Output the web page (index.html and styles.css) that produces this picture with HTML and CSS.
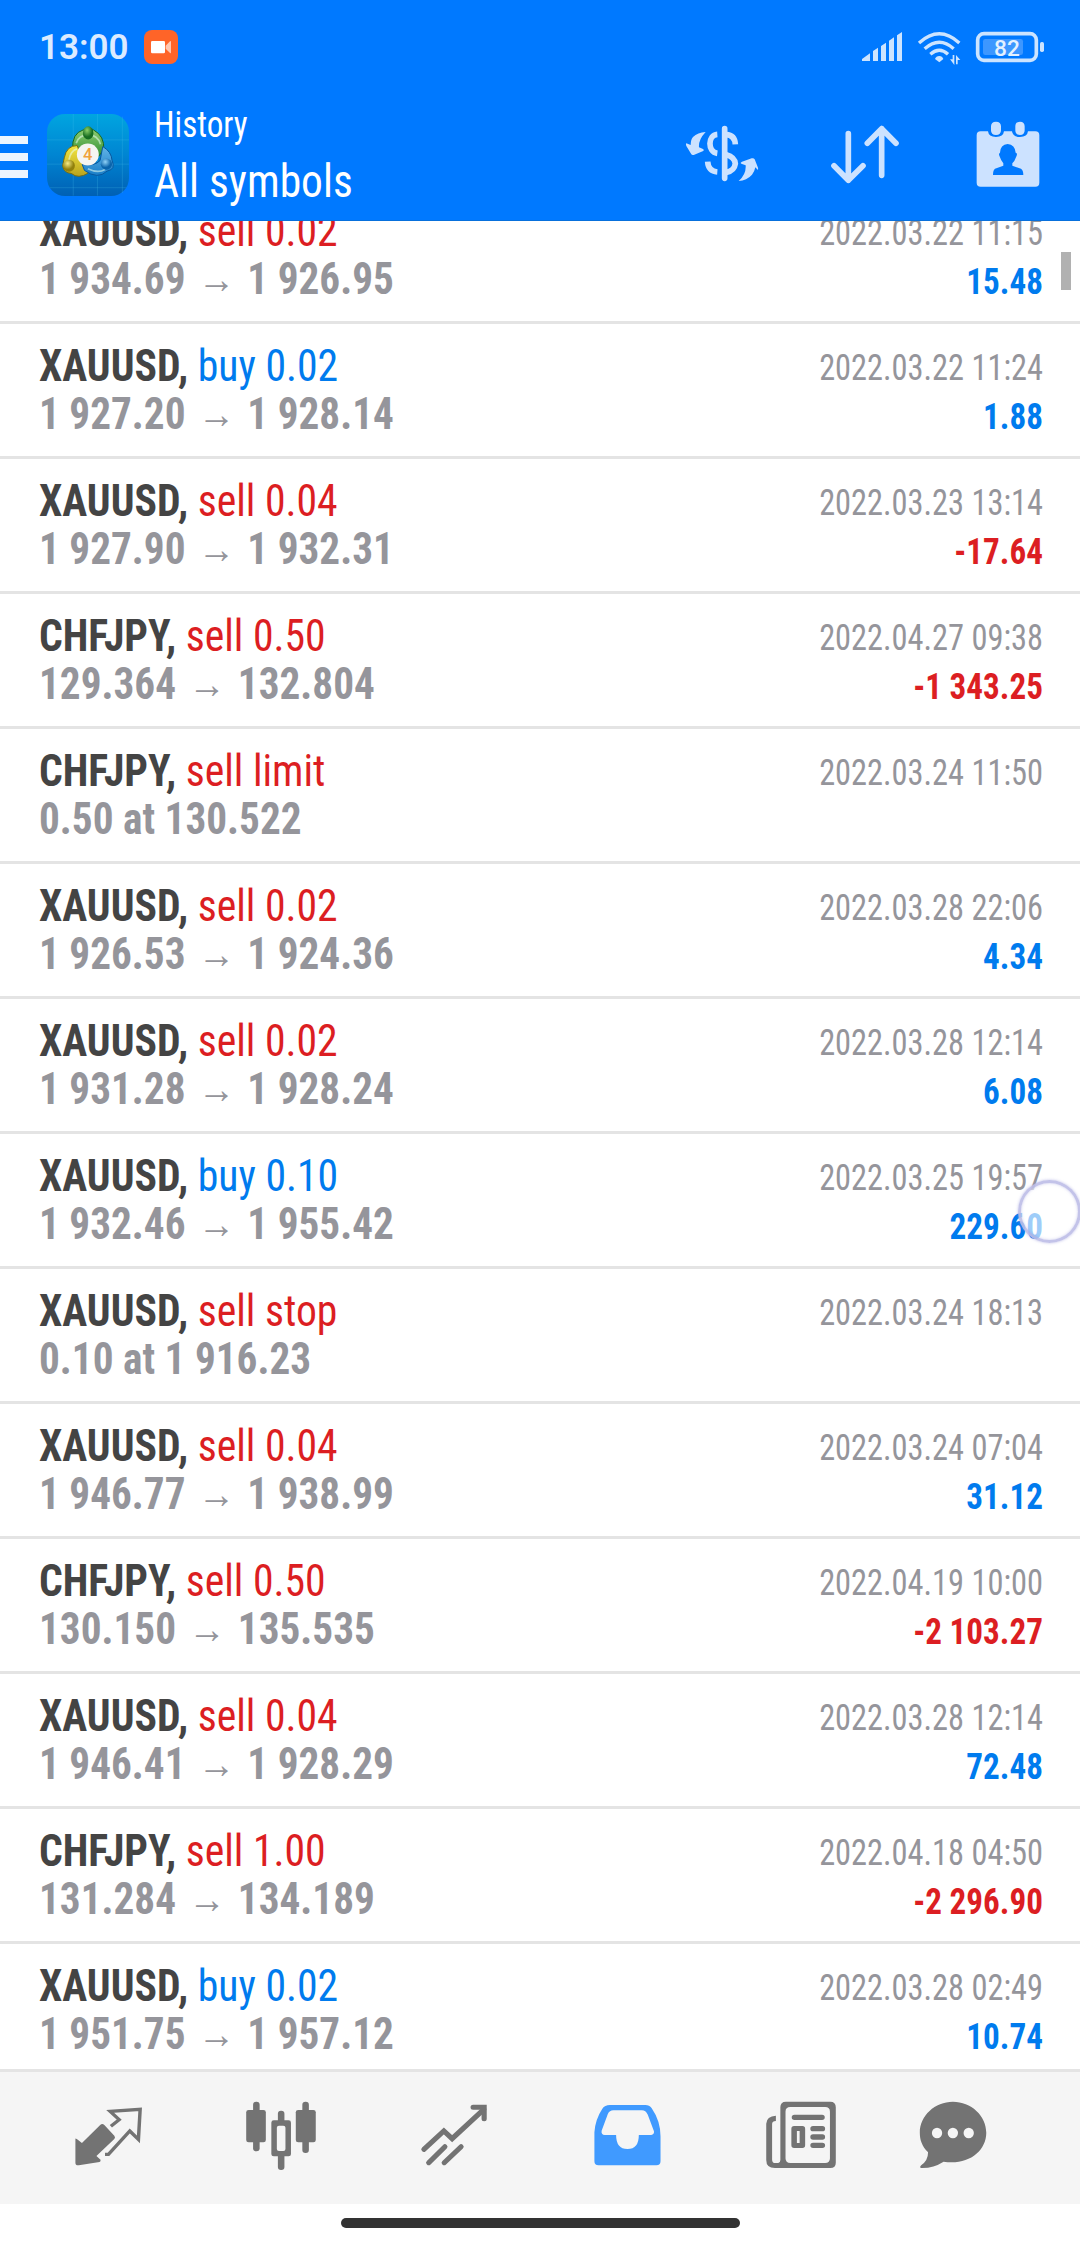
FILE: index.html
```html
<!DOCTYPE html>
<html lang="en"><head><meta charset="utf-8"><title>History</title><link rel="stylesheet" href="styles.css"></head>
<body>
<div class="app">
<header class="header">
<div class="status">
<span class="clock">13:00</span>
<svg class="rec" viewBox="0 0 102 102"><rect width="102" height="102" rx="24" fill="#ff6428"/><rect x="21" y="33" width="42" height="37" rx="4" fill="#fff"/><path d="M65 47L78 34Q81 32 81 36V67Q81 71 78 69L65 56Z" fill="#ffc7b0"/></svg>
<svg class="signals" viewBox="600 81 558 120"><g fill="#cce4ff"><path d="M606 183V177L630 160V183ZM639 183V153L654 143V183ZM663 183V138L678 128V183ZM687 183V122L702 112V183ZM711 183V106L726 96V183Z"/><path d="M825 177Q828 168 838 168Q847 168 850 177L838 187Z"/><path d="M870 178h8v-13h5v30zM888 165l13 15h-8v13h-5z"/><rect x="1140" y="126" width="12" height="30" rx="5"/></g><g fill="none" stroke="#cce4ff" stroke-width="10"><path d="M777 129Q838 74 898 129M794 146Q838 107 881 146M811 163Q838 139 864 163"/><rect x="953" y="101" width="176" height="80" rx="19" stroke-width="11"/></g><rect x="969" y="117" width="120" height="48" rx="7" fill="#3d97ff"/><text class="battery" x="1041" y="167" text-anchor="middle">82</text></svg>
</div>
<div class="toolbar">
<div class="burger"><i></i><i></i><i></i></div>
<svg class="logo" viewBox="141 342 247 247"><defs><linearGradient id="bg" x2="0" y2="1"><stop stop-color="#00a5e0"/><stop offset=".5" stop-color="#0085d2"/><stop offset="1" stop-color="#0060b4"/></linearGradient><linearGradient id="gr" x2="0" y2="1"><stop stop-color="#8ccb70"/><stop offset="1" stop-color="#2e8e31"/></linearGradient><linearGradient id="ye" x2="0" y2="1"><stop stop-color="#f3e641"/><stop offset="1" stop-color="#b9a31c"/></linearGradient><linearGradient id="bl" x2="0" y2="1"><stop stop-color="#62b4e7"/><stop offset="1" stop-color="#197ec8"/></linearGradient><radialGradient id="gh" cx=".4" cy=".3"><stop stop-color="#8cd069"/><stop offset="1" stop-color="#176d21"/></radialGradient><radialGradient id="yh" cx=".4" cy=".3"><stop stop-color="#f5ec87"/><stop offset="1" stop-color="#91800d"/></radialGradient><radialGradient id="bh" cx=".4" cy=".3"><stop stop-color="#90d2f8"/><stop offset="1" stop-color="#0a64ab"/></radialGradient></defs><rect x="141" y="342" width="247" height="247" rx="54" fill="url(#bg)"/><path d="M220 342V588M293 342V588M368 350V580M141 420H388M141 493H388M150 564H380" stroke="#4cc4ee" stroke-opacity=".35" stroke-width="2"/><path d="M218 448Q216 400 250 390H281Q315 408 312 450L296 470H232Z" fill="url(#gr)" stroke="#17671c" stroke-width="3"/><path d="M232 437Q200 437 193 474L188 498Q192 520 214 521Q236 539 265 520L250 485Z" fill="url(#ye)" stroke="#746c12" stroke-width="3"/><path d="M309 440Q335 455 337 482Q349 509 322 514Q294 541 254 512L247 494Q285 500 301 482Z" fill="url(#bl)" stroke="#07579d" stroke-width="3"/><path d="M229 430Q237 405 265 405Q294 405 302 433M207 480Q212 453 231 447M264 507Q295 522 316 509" fill="none" stroke="#e8fff0" stroke-opacity=".55" stroke-width="5"/><ellipse cx="265" cy="399" rx="16" ry="20" fill="url(#gh)"/><circle cx="207" cy="498" r="18" fill="url(#yh)"/><circle cx="320" cy="493" r="17" fill="url(#bh)"/><circle cx="264" cy="464" r="33" fill="#f5f5f2"/><text class="four" x="264" y="482" text-anchor="middle">4</text></svg>
<div class="titles"><div class="sub c">History</div><div class="main c">All symbols</div></div>
<svg class="actions" viewBox="60 342 1100 240"><g fill="#cce2ff"><path d="M137 396Q113 397 99 411Q92 419 92 435L79 430Q77 431 79 438L94 463Q97 467 103 464L128 454Q134 451 129 447L117 442Q115 419 137 396ZM236 543Q260 542 276 524Q284 514 286 502L293 509Q295 510 294 503L284 478Q281 473 275 475L246 485Q238 489 246 492L257 496Q259 523 236 543ZM993 379q0-14 15-14t15 14v12q0 14-15 14t-15-14zM1066 379q0-14 14-14t14 14v12q0 14-14 14t-14-14z"/><path d="M962 394h22q2 17 24 17t24-17h24q2 17 24 17t24-17h22q12 0 12 12v142q0 12-12 12h-164q-12 0-12-12v-142q0-12 12-12z"/></g><path fill="#0079ff" d="M1043 432Q1065 434 1067 458Q1075 460 1067 474Q1063 486 1057 490V497L1083 506Q1090 510 1090 525H999Q999 510 1005 506L1030 497V490Q1023 482 1020 472Q1014 461 1020 458Q1021 434 1043 432Z"/><g fill="none" stroke="#cce2ff" stroke-width="17" stroke-linecap="round" stroke-linejoin="round"><path d="M194 386V535M565 401V541L522 497M565 541L609 497M665 526V386L622 430M665 386L708 430"/></g><g fill="none" stroke="#cce2ff" stroke-width="17"><path d="M172 403C143 405 142 456 172 460M143 485Q145 514 172 516M199 404Q224 405 226 433M199 464Q224 471 226 491Q223 513 199 517"/></g></svg>
</div>
</header>
<main class="list">
<div class="row first"><div class="l"><div class="name"><b class="c">XAUUSD, </b><span class="c sell">sell 0.02</span></div><div class="price"><b class="c">1 934.69</b><span class="ar">→</span><b class="c">1 926.95</b></div></div><div class="r"><div class="date c">2022.03.22 11:15</div><div class="pl c">15.48</div></div></div>
<div class="row"><div class="l"><div class="name"><b class="c">XAUUSD, </b><span class="c buy">buy 0.02</span></div><div class="price"><b class="c">1 927.20</b><span class="ar">→</span><b class="c">1 928.14</b></div></div><div class="r"><div class="date c">2022.03.22 11:24</div><div class="pl c">1.88</div></div></div>
<div class="row"><div class="l"><div class="name"><b class="c">XAUUSD, </b><span class="c sell">sell 0.04</span></div><div class="price"><b class="c">1 927.90</b><span class="ar">→</span><b class="c">1 932.31</b></div></div><div class="r"><div class="date c">2022.03.23 13:14</div><div class="pl loss c">-17.64</div></div></div>
<div class="row"><div class="l"><div class="name"><b class="c">CHFJPY, </b><span class="c sell">sell 0.50</span></div><div class="price"><b class="c">129.364</b><span class="ar">→</span><b class="c">132.804</b></div></div><div class="r"><div class="date c">2022.04.27 09:38</div><div class="pl loss c">-1 343.25</div></div></div>
<div class="row"><div class="l"><div class="name"><b class="c">CHFJPY, </b><span class="c sell">sell limit</span></div><div class="price"><b class="c">0.50 at 130.522</b></div></div><div class="r"><div class="date c">2022.03.24 11:50</div></div></div>
<div class="row"><div class="l"><div class="name"><b class="c">XAUUSD, </b><span class="c sell">sell 0.02</span></div><div class="price"><b class="c">1 926.53</b><span class="ar">→</span><b class="c">1 924.36</b></div></div><div class="r"><div class="date c">2022.03.28 22:06</div><div class="pl c">4.34</div></div></div>
<div class="row"><div class="l"><div class="name"><b class="c">XAUUSD, </b><span class="c sell">sell 0.02</span></div><div class="price"><b class="c">1 931.28</b><span class="ar">→</span><b class="c">1 928.24</b></div></div><div class="r"><div class="date c">2022.03.28 12:14</div><div class="pl c">6.08</div></div></div>
<div class="row"><div class="l"><div class="name"><b class="c">XAUUSD, </b><span class="c buy">buy 0.10</span></div><div class="price"><b class="c">1 932.46</b><span class="ar">→</span><b class="c">1 955.42</b></div></div><div class="r"><div class="date c">2022.03.25 19:57</div><div class="pl c">229.60</div></div><i class="touch"></i></div>
<div class="row"><div class="l"><div class="name"><b class="c">XAUUSD, </b><span class="c sell">sell stop</span></div><div class="price"><b class="c">0.10 at 1 916.23</b></div></div><div class="r"><div class="date c">2022.03.24 18:13</div></div></div>
<div class="row"><div class="l"><div class="name"><b class="c">XAUUSD, </b><span class="c sell">sell 0.04</span></div><div class="price"><b class="c">1 946.77</b><span class="ar">→</span><b class="c">1 938.99</b></div></div><div class="r"><div class="date c">2022.03.24 07:04</div><div class="pl c">31.12</div></div></div>
<div class="row"><div class="l"><div class="name"><b class="c">CHFJPY, </b><span class="c sell">sell 0.50</span></div><div class="price"><b class="c">130.150</b><span class="ar">→</span><b class="c">135.535</b></div></div><div class="r"><div class="date c">2022.04.19 10:00</div><div class="pl loss c">-2 103.27</div></div></div>
<div class="row"><div class="l"><div class="name"><b class="c">XAUUSD, </b><span class="c sell">sell 0.04</span></div><div class="price"><b class="c">1 946.41</b><span class="ar">→</span><b class="c">1 928.29</b></div></div><div class="r"><div class="date c">2022.03.28 12:14</div><div class="pl c">72.48</div></div></div>
<div class="row"><div class="l"><div class="name"><b class="c">CHFJPY, </b><span class="c sell">sell 1.00</span></div><div class="price"><b class="c">131.284</b><span class="ar">→</span><b class="c">134.189</b></div></div><div class="r"><div class="date c">2022.04.18 04:50</div><div class="pl loss c">-2 296.90</div></div></div>
<div class="row"><div class="l"><div class="name"><b class="c">XAUUSD, </b><span class="c buy">buy 0.02</span></div><div class="price"><b class="c">1 951.75</b><span class="ar">→</span><b class="c">1 957.12</b></div></div><div class="r"><div class="date c">2022.03.28 02:49</div><div class="pl c">10.74</div></div></div>
<i class="scroll"></i>
</main>
<nav class="nav">
<svg viewBox="63.9 66 502.4 396" preserveAspectRatio="none"><path d="M219 266Q219 264 223 267L238 279L291 225Q297 219 303 225L332 257Q336 262 332 267L280 318L292 329Q293 335 289 336L229 346Q219 347 219 338Z"/><path d="M322 229L346 209L320 184L407 178L402 268L377 243L315 313H305" fill="none" stroke="#737373" stroke-width="10"/></svg>
<svg viewBox="566.3 66 502.4 396" preserveAspectRatio="none"><rect x="735" y="155" width="19" height="149" rx="9"/><rect x="715" y="180" width="57" height="97" rx="7"/><rect x="878" y="155" width="19" height="154" rx="9"/><rect x="859" y="180" width="58" height="97" rx="7"/><rect x="807" y="182" width="19" height="178" rx="9"/><rect x="788" y="211" width="57" height="108" rx="7"/><rect x="804" y="227" width="25" height="76" rx="6" fill="#f5f5f5"/></svg>
<svg viewBox="1068.7 66 502.4 396" preserveAspectRatio="none"><g fill="none" stroke="#737373" stroke-width="15"><path d="M1231 298L1289 243L1313 266L1405 178" stroke-linecap="round"/><path d="M1374 172H1406V206" stroke-linecap="round"/><path d="M1245 338L1292 290M1290 338L1339 290" stroke-linecap="round"/></g></svg>
<svg viewBox="2.9 66 502.4 396" preserveAspectRatio="none"><path fill="#409aff" fill-rule="evenodd" d="M203 165H306Q318 165 324 174Q350 213 350 259V334Q350 346 338 346H170Q158 346 158 334V247Q160 209 181 176Q188 165 203 165ZM213 181Q202 181 197 192L179 242Q177 254 188 255H221Q221 297 254 297Q287 297 287 255H323Q332 254 331 244L313 194Q307 181 296 181Z"/></svg>
<svg viewBox="505.3 66 502.4 396" preserveAspectRatio="none"><path fill-rule="evenodd" d="M714 155H843Q859 155 859 172V338Q859 354 843 354H682Q657 354 657 330V221Q658 198 685 197V213Q674 213 674 222V328Q674 339 681 339H692Q698 338 698 330V172Q698 155 714 155ZM727 171Q713 171 713 185V325Q713 339 727 339H828Q842 339 842 325V185Q842 171 828 171Z"/><path fill-rule="evenodd" d="M738 228H762Q770 228 770 236V286Q770 294 762 294H738Q730 294 730 286V236Q730 228 738 228ZM746 243V279H754V243Z"/><path d="M739 202H819M793 236H820M793 261H820M793 286H820" stroke="#737373" stroke-width="16" stroke-linecap="round"/></svg>
<svg viewBox="1007.7 66 502.4 396" preserveAspectRatio="none"><path d="M1199 155C1252 155 1296 197 1296 248C1296 304 1242 347 1172 335Q1142 355 1107 354Q1101 353 1107 346Q1127 332 1127 307C1109 288 1103 269 1103 248C1103 197 1147 155 1199 155Z"/><g fill="#f5f5f5"><ellipse cx="1153" cy="249" rx="15" ry="16"/><ellipse cx="1199" cy="249" rx="15" ry="16"/><ellipse cx="1245" cy="249" rx="15" ry="16"/></g></svg>
</nav>
<footer class="gesture"><i></i></footer>
</div>
</body></html>
```
FILE: styles.css
```css
* { box-sizing: border-box; }
body { margin: 0; font-family: Roboto, sans-serif; background: #fff; }
.app { width: 1080px; height: 2248px; display: flex; flex-direction: column; overflow: hidden; }
svg { display: block; }
.c { font-family: "Roboto Condensed", Roboto, sans-serif; font-stretch: 75%; white-space: pre; }
.header { height: 221px; background: #0079ff; flex: none; border-bottom: 1px solid #0870dc; }
.status { height: 93px; display: flex; align-items: center; padding: 3px 34px 0 39px; }
.clock { font-size: 35px; font-weight: 600; color: #dcebff; line-height: 40px; width: 88px; }
.rec { width: 34px; height: 34px; margin: -2px 0 0 17px; }
.signals { width: 186px; height: 40px; margin: -2px 0 0 auto; }
.battery { font: 500 68px Roboto, sans-serif; fill: #e4f1ff; }
.four { font: 500 50px Roboto, sans-serif; fill: #f0a23c; }
.toolbar { height: 127px; display: flex; align-items: flex-start; }
.burger { width: 28px; margin-top: 43px; display: flex; flex-direction: column; gap: 9px; }
.burger i { height: 8px; background: #edf5ff; }
.logo { width: 82px; height: 82px; margin: 21px 0 0 19px; }
.titles { margin: 11px 0 0 25px; color: #fff; flex: 1; }
.sub { font-size: 36px; line-height: 42px; transform: scaleX(.92); transform-origin: left; }
.main { font-size: 47px; line-height: 54px; margin-top: 8px; transform: scaleX(.925); transform-origin: left; }
.actions { width: 366.67px; height: 80px; margin: 21px 33px 0 0; flex: none; }
.list { flex: 1; min-height: 0; overflow: hidden; position: relative; }
.row { position: relative; height: 135px; border-bottom: 3px solid #e4e4e4; padding: 16px 37px 0 39px; display: flex; justify-content: space-between; }
.row.first { margin-top: -32px; }
.name { font-size: 44px; line-height: 52px; height: 48px; color: #444; white-space: pre; transform: scaleX(.947); transform-origin: left; }
.name .sell { color: #dc1e22; }
.name .buy { color: #007bee; }
.price { font-size: 44px; line-height: 52px; color: #95959b; display: flex; transform: scaleX(.937); transform-origin: left; }
.ar { font: bold 40px/52px "Liberation Sans", sans-serif; width: 66px; display: flex; justify-content: center; }
.r { text-align: right; }
.date { font-size: 36px; line-height: 46px; height: 50px; padding-top: 5px; color: #95959b; transform: scaleX(.899); transform-origin: right; }
.pl { font-size: 36px; line-height: 46px; padding-top: 4px; font-weight: bold; color: #007bee; transform: scaleX(.92); transform-origin: right; }
.pl.loss { color: #dc1e22; }
.scroll { position: absolute; left: 1061px; top: 31px; width: 10px; height: 38px; background: #b1b1b1; }
.touch { position: absolute; left: 1018px; top: 46px; width: 63px; height: 63px; border-radius: 50%; background: rgba(255,255,255,.62); border: 3px solid rgba(175,175,225,.75); box-shadow: 0 0 3px rgba(150,150,220,.6), inset 0 0 3px rgba(150,150,220,.5); }
.nav { height: 135px; background: #f5f5f5; border-top: 3px solid #e4e4e4; padding-left: 22px; display: flex; flex: none; }
.nav svg { width: 173px; height: 132px; fill: #737373; flex: none; }
.gesture { height: 44px; flex: none; display: flex; justify-content: center; padding-top: 14px; }
.gesture i { width: 399px; height: 10px; border-radius: 5px; background: #323232; }
```
